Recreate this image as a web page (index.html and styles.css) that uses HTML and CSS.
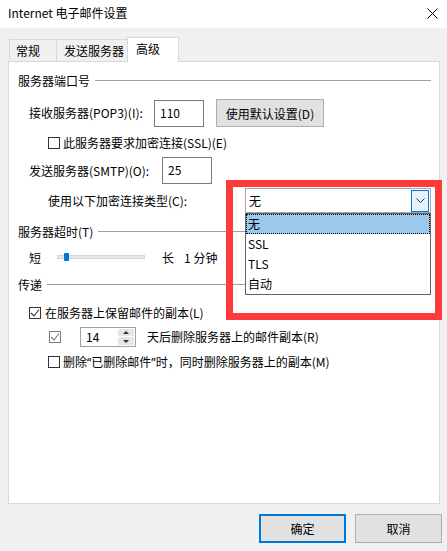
FILE: index.html
```html
<!DOCTYPE html>
<html lang="zh-CN">
<head>
    <meta charset="UTF-8">
    <meta name="viewport" content="width=device-width, initial-scale=1.0">
    <title>Internet 电子邮件设置</title>
    <link rel="stylesheet" href="styles.css">
</head>
<body>
    <div class="window">
        <div class="titlebar">
            <span class="title">Internet 电子邮件设置</span>
            <svg class="close" width="11" height="11" viewBox="0 0 11 11">
                <path d="M0.5 0.5 L10.5 10.5 M10.5 0.5 L0.5 10.5" stroke="#000" stroke-width="1" fill="none"/>
            </svg>
        </div>

        <div class="tabs">
            <div class="tab tab-general">常规</div>
            <div class="tab tab-outgoing">发送服务器</div>
            <div class="tab tab-advanced active">高级</div>
        </div>

        <div class="panel">
            <div class="group-title">
                <span>服务器端口号</span>
                <i class="rule"></i>
            </div>

            <div class="row row-pop">
                <span class="label pop-label">接收服务器(POP3)(I):</span>
                <div class="textbox">110</div>
                <button class="btn btn-default">使用默认设置(D)</button>
            </div>

            <div class="row row-ssl">
                <span class="checkbox"></span>
                <span class="label">此服务器要求加密连接(SSL)(E)</span>
            </div>

            <div class="row row-smtp">
                <span class="label smtp-label">发送服务器(SMTP)(O):</span>
                <div class="textbox">25</div>
            </div>

            <div class="row row-crypto">
                <span class="label crypto-label">使用以下加密连接类型(C):</span>
                <div class="combo">
                    <span class="combo-value">无</span>
                    <span class="combo-arrow">
                        <svg width="9" height="5" viewBox="0 0 9 5">
                            <path d="M0.5 0.5 L4.5 4.5 L8.5 0.5" stroke="#333" stroke-width="1" fill="none"/>
                        </svg>
                    </span>
                    <ul class="combo-list">
                        <li class="selected">无</li>
                        <li>SSL</li>
                        <li>TLS</li>
                        <li>自动</li>
                    </ul>
                </div>
            </div>

            <div class="group-title group-timeout">
                <span>服务器超时(T)</span>
                <i class="rule"></i>
            </div>

            <div class="row row-slider">
                <span class="label">短</span>
                <div class="track"><span class="thumb"></span></div>
                <span class="label long">长</span>
                <span class="label minutes">1 分钟</span>
            </div>

            <div class="group-title group-delivery">
                <span>传递</span>
                <i class="rule"></i>
            </div>

            <div class="row row-keep">
                <span class="checkbox checked">
                    <svg width="10" height="10" viewBox="0 0 10 10">
                        <path d="M1 5 L4 8 L9 1.5" stroke="#333" stroke-width="1.1" fill="none"/>
                    </svg>
                </span>
                <span class="label">在服务器上保留邮件的副本(L)</span>
            </div>

            <div class="row row-days">
                <span class="checkbox checked dim">
                    <svg width="10" height="10" viewBox="0 0 10 10">
                        <path d="M1 5 L4 8 L9 1.5" stroke="#777" stroke-width="1.1" fill="none"/>
                    </svg>
                </span>
                <div class="spinner">
                    <span class="spinner-value">14</span>
                    <span class="spinner-buttons">
                        <span class="spin-up"></span>
                        <span class="spin-down"></span>
                    </span>
                </div>
                <span class="label">天后删除服务器上的邮件副本(R)</span>
            </div>

            <div class="row row-remove">
                <span class="checkbox"></span>
                <span class="label">删除<span class="quote">“</span>已删除邮件<span class="quote">”</span>时，同时删除服务器上的副本(M)</span>
            </div>
        </div>

        <div class="footer">
            <button class="btn btn-dialog primary">确定</button>
            <button class="btn btn-dialog">取消</button>
        </div>

        <div class="callout"></div>
    </div>
</body>
</html>
```

FILE: styles.css
```css
* {
    box-sizing: border-box;
}

body {
    margin: 0;
    font-family: 'Noto Sans CJK SC', 'Microsoft YaHei', sans-serif;
    font-size: 12px;
    line-height: 16px;
    color: #000;
    background-color: #f0f0f0;
}

.window {
    position: relative;
    width: 447px;
    height: 551px;
    overflow: hidden;
}

/* title bar */

.titlebar {
    display: flex;
    align-items: center;
    justify-content: space-between;
    height: 28px;
    padding: 0 8px 2px 8px;
    background-color: #fff;
}

.close {
    margin-right: 1px;
}

/* tabs */

.tabs {
    display: flex;
    align-items: flex-end;
    height: 24px;
    margin-top: 9px;
    padding-left: 9px;
}

.tab {
    height: 22px;
    padding-left: 6px;
    line-height: 21px;
    border: 1px solid #d9d9d9;
    border-bottom: none;
    background-color: #f0f0f0;
}

.tab-general {
    width: 48px;
}

.tab-outgoing {
    width: 72px;
    margin-left: -1px;
    padding-left: 7px;
}

.tab-advanced {
    width: 52px;
    margin-left: -1px;
    padding-left: 8px;
}

.tab.active {
    position: relative;
    z-index: 1;
    height: 25px;
    margin-bottom: -1px;
    line-height: 22px;
    background-color: #fff;
}

/* panel */

.panel {
    width: 432px;
    height: 443px;
    margin-left: 8px;
    padding: 11px 8px 0 9px;
    border: 1px solid #d9d9d9;
    background-color: #fff;
}

.group-title {
    display: flex;
    align-items: center;
    height: 16px;
}

.rule {
    flex: 1;
    height: 1px;
    margin-left: 5px;
    margin-top: -1px;
    background-color: #a0a0a0;
}

.row {
    display: flex;
    align-items: center;
    white-space: nowrap;
}

.label {
    flex: none;
}

.quote {
    font-family: 'Noto Sans', sans-serif;
}

.textbox {
    width: 50px;
    height: 27px;
    padding: 4px 0 0 5px;
    border: 1px solid #7a7a7a;
    background-color: #fff;
}

.btn {
    font-family: inherit;
    font-size: 12px;
    color: #000;
    background-color: #e1e1e1;
    border: 1px solid #adadad;
    padding: 0;
}

.checkbox {
    display: flex;
    align-items: center;
    justify-content: center;
    flex: none;
    width: 12px;
    height: 12px;
    border: 1px solid #333;
    background-color: #fff;
}

.checkbox.dim {
    border-color: #7a7a7a;
}

/* rows of the ports group */

.row-pop {
    height: 28px;
    margin-top: 10px;
    padding-left: 11px;
}

.pop-label {
    width: 125px;
}

.btn-default {
    width: 108px;
    height: 28px;
    margin-left: 12px;
}

.row-ssl {
    height: 16px;
    margin-top: 8px;
    padding-left: 30px;
}

.row-ssl .checkbox {
    margin-right: 3px;
}

.row-smtp {
    height: 27px;
    margin-top: 6px;
    padding-left: 11px;
}

.smtp-label {
    width: 133px;
}

.row-crypto {
    height: 25px;
    margin-top: 4px;
    padding-left: 30px;
}

.crypto-label {
    width: 197px;
}

.combo {
    position: relative;
    display: flex;
    align-items: center;
    width: 186px;
    height: 25px;
    padding-left: 3px;
    border: 1px solid #a8a8a8;
    background-color: #fff;
}

.combo-value {
    flex: 1;
}

.combo-arrow {
    display: flex;
    align-items: center;
    justify-content: center;
    width: 18px;
    height: 22px;
    margin-right: 1px;
    border: 1px solid #0078d7;
    background-color: #e5f1fb;
}

.combo-list {
    position: absolute;
    top: 24px;
    left: -1px;
    z-index: 3;
    width: 186px;
    margin: 0;
    padding: 0;
    list-style: none;
    border: 1px solid #646464;
    background-color: #fff;
}

.combo-list li {
    height: 20px;
    padding-left: 2px;
    line-height: 20px;
}

.combo-list li.selected {
    background-color: #99c9ef;
    outline: 1px dotted #000;
    outline-offset: -1px;
}

/* timeout group */

.group-timeout {
    margin-top: 11px;
}

.row-slider {
    height: 16px;
    margin-top: 10px;
    padding-left: 11px;
}

.track {
    position: relative;
    width: 88px;
    height: 4px;
    margin-left: 16px;
    margin-top: -3px;
    border: 1px solid #d6d6d6;
    background-color: #e7e7e7;
}

.thumb {
    position: absolute;
    top: -3px;
    left: 6px;
    width: 5px;
    height: 8px;
    border-radius: 1px;
    background-color: #0078d7;
}

.long {
    margin-left: 17px;
}

.minutes {
    margin-left: 10px;
}

/* delivery group */

.group-delivery {
    margin-top: 11px;
}

.row-keep {
    height: 16px;
    margin-top: 12px;
    padding-left: 11px;
}

.row-keep .checkbox {
    margin-right: 4px;
}

.row-days {
    height: 21px;
    margin-top: 5px;
    padding-left: 31px;
}

.spinner {
    display: flex;
    width: 56px;
    height: 20px;
    margin-left: 19px;
    border: 1px solid #a0a0a0;
    background-color: #fff;
}

.spinner-value {
    flex: 1;
    padding-left: 5px;
    line-height: 18px;
}

.spinner-buttons {
    display: flex;
    flex-direction: column;
    width: 16px;
    margin: 1px;
}

.spin-up,
.spin-down {
    position: relative;
    flex: 1;
    background-color: #e6e6e6;
}

.spin-up {
    border-bottom: 1px solid #fff;
}

.spin-up::after,
.spin-down::after {
    content: '';
    position: absolute;
    left: 5px;
    border-left: 3px solid transparent;
    border-right: 3px solid transparent;
}

.spin-up::after {
    top: 2px;
    border-bottom: 3px solid #333;
}

.spin-down::after {
    top: 3px;
    border-top: 3px solid #333;
}

.row-days .label {
    margin-left: 11px;
}

.row-remove {
    height: 16px;
    margin-top: 7px;
    padding-left: 30px;
}

.row-remove .checkbox {
    margin-right: 3px;
}

/* dialog buttons */

.footer {
    display: flex;
    justify-content: flex-end;
    gap: 9px;
    margin-top: 10px;
    padding-right: 5px;
}

.btn-dialog {
    width: 87px;
    height: 29px;
}

.btn-dialog.primary {
    border: 2px solid #0078d7;
}

/* red annotation around the open list */

.callout {
    position: absolute;
    top: 180px;
    left: 226px;
    z-index: 2;
    width: 216px;
    height: 140px;
    border: 7px solid #fe3a3a;
}
```
